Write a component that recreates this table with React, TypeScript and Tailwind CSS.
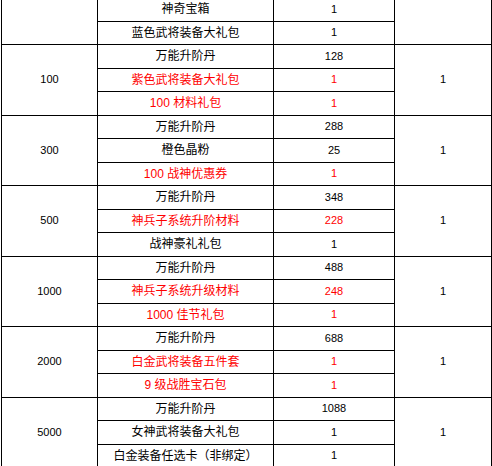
type Item = { name: string; count: string; red?: boolean };
type Group = { level: string; reward: string; items: Item[] };

const GROUPS: Group[] = [
  {
    level: "",
    reward: "",
    items: [
      { name: "神奇宝箱", count: "1" },
      { name: "蓝色武将装备大礼包", count: "1" },
    ],
  },
  {
    level: "100",
    reward: "1",
    items: [
      { name: "万能升阶丹", count: "128" },
      { name: "紫色武将装备大礼包", count: "1", red: true },
      { name: "100 材料礼包", count: "1", red: true },
    ],
  },
  {
    level: "300",
    reward: "1",
    items: [
      { name: "万能升阶丹", count: "288" },
      { name: "橙色晶粉", count: "25" },
      { name: "100 战神优惠券", count: "1", red: true },
    ],
  },
  {
    level: "500",
    reward: "1",
    items: [
      { name: "万能升阶丹", count: "348" },
      { name: "神兵子系统升阶材料", count: "228", red: true },
      { name: "战神豪礼礼包", count: "1" },
    ],
  },
  {
    level: "1000",
    reward: "1",
    items: [
      { name: "万能升阶丹", count: "488" },
      { name: "神兵子系统升级材料", count: "248", red: true },
      { name: "1000 佳节礼包", count: "1", red: true },
    ],
  },
  {
    level: "2000",
    reward: "1",
    items: [
      { name: "万能升阶丹", count: "688" },
      { name: "白金武将装备五件套", count: "1", red: true },
      { name: "9 级战胜宝石包", count: "1", red: true },
    ],
  },
  {
    level: "5000",
    reward: "1",
    items: [
      { name: "万能升阶丹", count: "1088" },
      { name: "女神武将装备大礼包", count: "1" },
      { name: "白金装备任选卡（非绑定）", count: "1" },
    ],
  },
];

const cell = "border border-black p-0 text-center align-middle";

export default function App() {
  return (
    <div className="h-[466px] w-[492px] overflow-hidden bg-white">
      <table
        className="ml-[1px] mt-[-3px] w-[490px] table-fixed border-collapse text-[12px] leading-none text-black"
        style={{ fontFamily: '"Liberation Sans", "Noto Sans CJK SC", sans-serif' }}
      >
        <colgroup>
          <col className="w-[96px]" />
          <col className="w-[176px]" />
          <col className="w-[121px]" />
          <col className="w-[97px]" />
        </colgroup>
        <tbody>
          {GROUPS.map((g, gi) =>
            g.items.map((it, i) => (
              <tr key={`${gi}-${i}`} className="h-[23.5px]">
                {i === 0 ? (
                  <td rowSpan={g.items.length} className={`${cell} text-[11px]`}>
                    {g.level}
                  </td>
                ) : null}
                <td className={`${cell} ${it.red ? "text-[#ff0000]" : ""}`}>{it.name}</td>
                <td className={`${cell} text-[11px] ${it.red ? "text-[#ff0000]" : ""}`}>
                  {it.count}
                </td>
                {i === 0 ? (
                  <td rowSpan={g.items.length} className={`${cell} text-[11px]`}>
                    {g.reward}
                  </td>
                ) : null}
              </tr>
            )),
          )}
        </tbody>
      </table>
    </div>
  );
}
